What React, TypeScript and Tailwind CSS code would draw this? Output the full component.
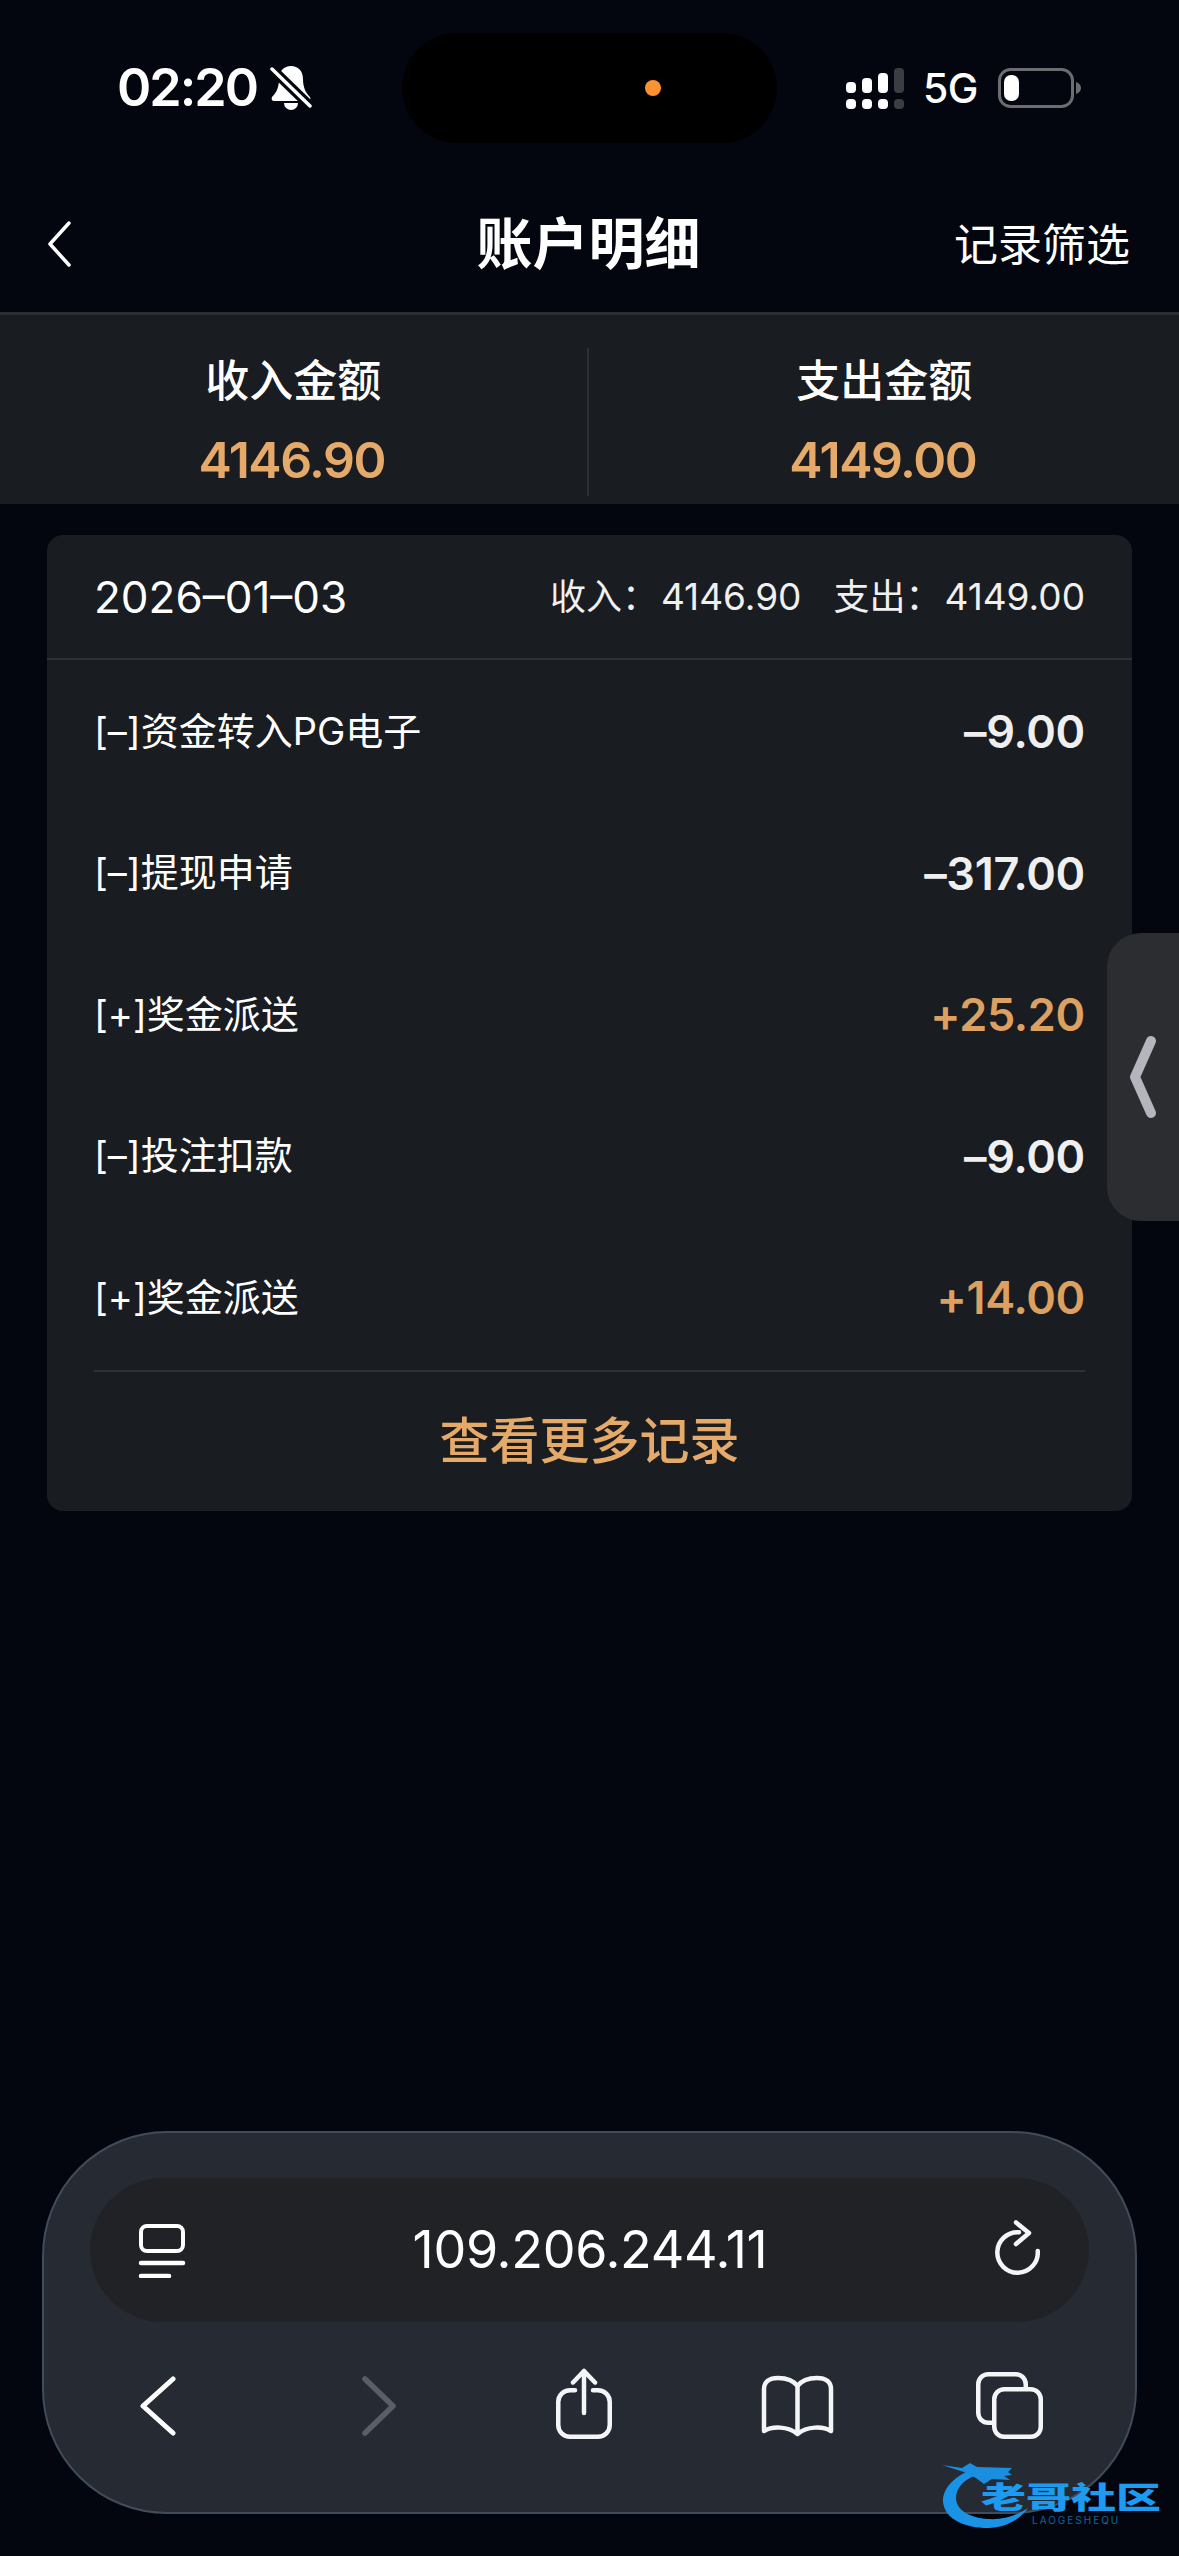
const records = [
  { label: '[–]资金转入PG电子', amount: '–9.00', income: false },
  { label: '[–]提现申请', amount: '–317.00', income: false },
  { label: '[+]奖金派送', amount: '+25.20', income: true },
  { label: '[–]投注扣款', amount: '–9.00', income: false },
  { label: '[+]奖金派送', amount: '+14.00', income: true },
]

function StatusBar() {
  return (
    <div className="grid h-[176px] grid-cols-[402px_375px_1fr] items-center">
      <div className="flex items-center pl-[117px]">
        <span className="text-[52px] leading-none font-semibold tracking-[-2px] text-white">02:20</span>
        <svg className="ml-[13px]" width="42" height="46" viewBox="0 0 42 46" fill="none">
          <path d="M21 1c-7 0-12 5-12 13 0 9-3 14-7 18-1 2 0 4 2 4h34c2 0 3-2 2-4-4-4-7-9-7-18 0-8-5-13-12-13z" fill="#fff" />
          <path d="M14 38a7 7 0 0 0 14 0z" fill="#fff" />
          <path d="M2 4l38 37" stroke="#03060e" strokeWidth="10" />
          <path d="M2 4l38 37" stroke="#fff" strokeWidth="3.5" strokeLinecap="round" />
        </svg>
      </div>
      <div className="flex h-[110px] items-center justify-end rounded-[55px] bg-black pr-[116px]">
        <div className="size-4 rounded-full bg-[#ff9230]" />
      </div>
      <div className="flex items-center pl-[69px]">
        <svg width="58" height="41" viewBox="0 0 58 41">
          <rect x="0" y="14" width="10" height="11" rx="4" fill="#fff" />
          <rect x="16" y="10" width="10" height="15" rx="4" fill="#fff" />
          <rect x="32" y="5" width="10" height="20" rx="4" fill="#fff" />
          <rect x="48" y="0" width="10" height="25" rx="4" fill="#3a3d42" />
          <rect x="0" y="31" width="10" height="10" rx="4" fill="#fff" />
          <rect x="16" y="31" width="10" height="10" rx="4" fill="#fff" />
          <rect x="32" y="31" width="10" height="10" rx="4" fill="#fff" />
          <rect x="48" y="31" width="10" height="10" rx="4" fill="#3a3d42" />
        </svg>
        <span className="ml-[19px] text-[41px] leading-none font-medium tracking-[-0.5px] text-white">5G</span>
        <svg className="ml-[20px]" width="84" height="40" viewBox="0 0 84 40" fill="none">
          <rect x="1.5" y="1.5" width="73" height="37" rx="11" stroke="#6c6d70" strokeWidth="3" />
          <rect x="6" y="7" width="15" height="26" rx="7" fill="#fff" />
          <path d="M78 14c3 1 5 3 5 6s-2 5-5 6z" fill="#6c6d70" />
        </svg>
      </div>
    </div>
  )
}

function NavBar() {
  return (
    <div className="grid h-[136px] grid-cols-3 items-center pr-[49px] pl-[47px]">
      <svg width="24" height="46" viewBox="0 0 24 46" fill="none">
        <path d="M22 2L3 23l19 21" stroke="#fff" strokeWidth="3.5" strokeLinecap="round" strokeLinejoin="round" />
      </svg>
      <span className="text-center text-[56px] leading-none font-semibold whitespace-nowrap text-white">账户明细</span>
      <span className="pt-[2px] text-right text-[44px] leading-none text-white">记录筛选</span>
    </div>
  )
}

function Summary() {
  return (
    <div className="grid h-[192px] grid-cols-2 border-t-[3px] border-[#2b2e34] bg-[#191c21]">
      <div className="mt-[33px] mr-px mb-[8px] flex flex-col items-center border-r-2 border-[#2d3036]">
        <span className="mt-[11px] text-[44px] leading-none font-medium text-white">收入金额</span>
        <span className="mt-[32px] pr-[3px] text-[50px] leading-none font-semibold tracking-[-1.5px] text-[#e5aa6a]">4146.90</span>
      </div>
      <div className="mt-[33px] mb-[8px] flex flex-col items-center">
        <span className="mt-[11px] text-[44px] leading-none font-medium text-white">支出金额</span>
        <span className="mt-[32px] pr-[3px] text-[50px] leading-none font-semibold tracking-[-1.5px] text-[#e5aa6a]">4149.00</span>
      </div>
    </div>
  )
}

function RecordCard() {
  return (
    <div className="mx-[47px] mt-[31px] rounded-[16px] bg-[#191c21]">
      <div className="flex h-[125px] items-center justify-between border-b-2 border-[#2d3036] px-[47px] text-white">
        <span className="text-[44px] leading-none">2026–01–03</span>
        <div className="flex items-center text-[37px] leading-none text-[#f0f0f0]">
          <span className="mr-[3px] text-[36px]">收入：</span>
          <span>4146.90</span>
          <span className="mr-[3px] ml-[32px] text-[36px]">支出：</span>
          <span>4149.00</span>
        </div>
      </div>
      <div className="px-[47px]">
        <div className="border-b-2 border-[#2d3036] pb-[2px]">
          {records.map((r, i) => (
            <div key={i} className="flex h-[141.5px] items-center justify-between">
              <span className="text-[38px] leading-none text-white">{r.label}</span>
              <span
                className={`pt-[2px] text-[45px] leading-none font-semibold tracking-[-0.3px] ${r.income ? 'text-[#dca060]' : 'text-[#efefef]'}`}
              >
                {r.amount}
              </span>
            </div>
          ))}
        </div>
        <div className="flex h-[139px] items-center justify-center text-[50px] leading-none font-medium text-[#e5aa6a]">
          查看更多记录
        </div>
      </div>
    </div>
  )
}

function BrowserBar() {
  return (
    <div className="mx-[42px] mt-auto mb-[42px] h-[383px] rounded-[125px] border-2 border-[#414b5a] bg-[#262b33] px-[46px] pt-[45px]">
      <div className="grid h-[144px] grid-cols-[1fr_auto_1fr] items-center rounded-[72px] bg-[#202226] pr-[46px] pl-[47px]">
        <svg width="50" height="56" viewBox="0 0 50 56" fill="none">
          <rect x="4" y="4" width="42" height="25" rx="6" stroke="#fff" strokeWidth="4" />
          <path d="M4 41h42" stroke="#fff" strokeWidth="4.5" strokeLinecap="round" />
          <path d="M4 54h28" stroke="#fff" strokeWidth="4.5" strokeLinecap="round" />
        </svg>
        <span className="text-[52px] leading-none font-normal tracking-[-0.3px] text-white">109.206.244.11</span>
        <svg className="justify-self-end" width="50" height="60" viewBox="0 0 50 60" fill="none">
          <path d="M26 12.3A20.25 20.25 0 1 0 44.75 31" stroke="#f4f5f6" strokeWidth="4.5" strokeLinecap="round" />
          <path d="M23 2.5L36 13 23 24" stroke="#f4f5f6" strokeWidth="4.5" strokeLinecap="round" strokeLinejoin="round" />
        </svg>
      </div>
      <div className="mt-[46px] flex h-[72px] items-center pl-[50px]">
        <svg width="36" height="72" viewBox="0 0 36 72" fill="none">
          <path d="M33 11L3 38l30 27" stroke="#fff" strokeWidth="5" strokeLinecap="round" strokeLinejoin="round" />
        </svg>
        <svg className="ml-[186px]" width="34" height="72" viewBox="0 0 34 72" fill="none">
          <path d="M3 11l28 27L3 65" stroke="#5b5e66" strokeWidth="5.5" strokeLinecap="round" strokeLinejoin="round" />
        </svg>
        <svg className="ml-[158px]" width="60" height="72" viewBox="0 0 60 72" fill="none">
          <path
            d="M21 22.25h-5a11.75 11.75 0 0 0-11.75 11.75v23a11.75 11.75 0 0 0 11.75 11.75h28a11.75 11.75 0 0 0 11.75-11.75V34a11.75 11.75 0 0 0-11.75-11.75h-5"
            stroke="#f4f5f6"
            strokeWidth="4.5"
            strokeLinecap="round"
          />
          <path d="M30 45V3M19 14.5L30 3l11 11.5" stroke="#f4f5f6" strokeWidth="4.5" strokeLinecap="round" strokeLinejoin="round" />
        </svg>
        <svg className="ml-[146px]" width="76" height="72" viewBox="0 0 76 72" fill="none">
          <path
            d="M37.5 18C33 12 25 10 18 10 9 10 4 14 4 21v42c8-5 24-5 33.5 3C47 58 63 58 71 63V21c0-7-5-11-14-11-7 0-15 2-19.5 8z"
            stroke="#f4f5f6"
            strokeWidth="4.5"
            strokeLinejoin="round"
          />
          <path d="M37.5 18v48" stroke="#f4f5f6" strokeWidth="4.5" />
        </svg>
        <svg className="ml-[138px]" width="72" height="72" viewBox="0 0 72 72" fill="none">
          <path d="M18 54.75h-3.75a10 10 0 0 1-10-10V16.25a10 10 0 0 1 10-10h27.5a10 10 0 0 1 10 10V19" stroke="#f4f5f6" strokeWidth="4.5" />
          <rect x="20.25" y="21.25" width="46.5" height="47.5" rx="10" stroke="#f4f5f6" strokeWidth="4.5" />
        </svg>
      </div>
    </div>
  )
}

function SideHandle() {
  return (
    <div className="absolute top-[933px] right-0 flex h-[288px] w-[72px] items-center rounded-l-[34px] bg-[#2c2d30] pl-[22px]">
      <svg width="28" height="84" viewBox="0 0 28 84" fill="none">
        <path d="M22 6L6 42l16 36" stroke="#b5b5bd" strokeWidth="10" strokeLinecap="round" strokeLinejoin="round" />
      </svg>
    </div>
  )
}

function Watermark() {
  return (
    <div className="absolute top-[2462px] left-[942px] h-[66px] w-[222px]">
      <svg className="absolute top-0 left-0" width="90" height="66" viewBox="0 0 90 66" fill="none">
        <path d="M24 10C8 18 0 30 1 40c2 18 23 26 45 26 16 0 32-8 40-20-12 8-26 12-40 11C28 56 14 48 14 36c0-10 8-18 18-22z" fill="#1a93e6" />
        <path d="M0 3l20 3 8-5 7 4 35 1-4 4 4 3-8 1 6 4-18-1-8 5-8-6-12-6z" fill="#1a8fe0" />
      </svg>
      <span className="absolute top-[20px] left-[39px] origin-left scale-x-150 text-[30px] leading-none font-black whitespace-nowrap text-[#1c9bf0]">
        老哥社区
      </span>
      <span className="absolute top-[53px] left-[90px] text-[10px] leading-none tracking-[2px] text-[#12649f]">
        LAOGESHEQU
      </span>
    </div>
  )
}

export default function App() {
  return (
    <div className="relative flex h-[2556px] w-[1179px] flex-col overflow-hidden bg-[#03060e] [font-family:Inter,'Noto_Sans_CJK_SC',sans-serif]">
      <StatusBar />
      <NavBar />
      <Summary />
      <RecordCard />
      <BrowserBar />
      <SideHandle />
      <Watermark />
    </div>
  )
}
